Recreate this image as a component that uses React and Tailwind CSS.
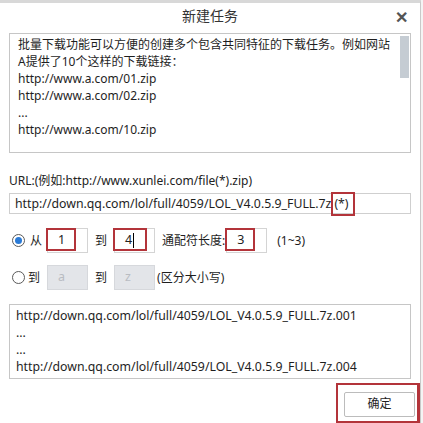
const font = {
  fontFamily: '"Noto Sans", "Noto Sans CJK SC", sans-serif',
};

function Radio({ checked }) {
  return (
    <span className="w-[13px] h-[13px] rounded-full border border-[#5a5a5a] flex items-center justify-center bg-white shrink-0">
      {checked && <span className="w-[7px] h-[7px] rounded-full bg-[#2a7ad6]" />}
    </span>
  );
}

function Box({ children, gray, marked, markW = 30 }) {
  return (
    <div
      className={`relative w-[41px] h-[25px] border flex items-center pl-[10px] text-[12.5px] ${
        gray ? "bg-[#e3e5e9] border-[#d6d8dc] text-[#b9bcc2]" : "bg-white border-[#d4d4d4] text-[#222]"
      }`}
    >
      {children}
      {marked && (
        <div
          className="absolute left-[-2px] top-[-1px] h-[23px] border-2 border-[#b3343a]"
          style={{ width: markW }}
        />
      )}
    </div>
  );
}

export default function App() {
  return (
    <div className="w-[423px] h-[423px] bg-[#f4f4f4] overflow-hidden" style={font}>
      <div className="w-[421px] h-[423px] bg-white border-r border-[#c9c9c9] border-t-[3px] border-t-[#d8d8d8] flex flex-col text-[#1e1e1e]">
        <div className="h-[30px] relative flex justify-center pt-[2px] text-[14px] text-[#333]">
          新建任务
          <span className="absolute right-[12px] top-[2px] text-[16px] font-bold text-[#555]">✕</span>
        </div>
        <div className="mx-[9px] h-[121px] border border-[#c6c6c6] relative pl-[8px] pt-[2px] text-[12px] leading-[17px]">
          <div>批量下载功能可以方便的创建多个包含共同特征的下载任务。例如网站</div>
          <div>A提供了10个这样的下载链接：</div>
          <div>http://www.a.com/01.zip</div>
          <div>http://www.a.com/02.zip</div>
          <div>...</div>
          <div>http://www.a.com/10.zip</div>
          <div className="absolute right-[1px] top-[2px] w-[9px] h-[42px] bg-[#c5ccd3]" />
        </div>
        <div className="mx-[9px] mt-[19px] text-[12px] leading-[17px] text-[#222]">
          URL:(例如:http://www.xunlei.com/file(*).zip)
        </div>
        <div className="mx-[9px] mt-[4px] h-[21px] border border-[#cfcfcf] flex items-center pl-[5px] text-[12.3px] relative">
          http://down.qq.com/lol/full/4059/LOL_V4.0.5.9_FULL.7z
          <span className="relative ml-[3px]">
            (*)
            <span className="absolute left-[-3px] top-[-3px] w-[24px] h-[24px] border-2 border-[#b3343a]" />
          </span>
        </div>
        <div className="mx-[9px] mt-[14px] h-[25px] flex items-center text-[12px]">
          <div className="ml-[3px]"><Radio checked /></div>
          <span className="ml-[5px] mr-[5px]">从</span>
          <Box marked>1</Box>
          <span className="ml-[7px] mr-[7px]">到</span>
          <Box marked markW={34}>4<span className="w-px h-[15px] bg-black ml-px" /></Box>
          <span className="ml-[7px]">通配符长度:</span>
          <div className="ml-[1px]"><Box marked>3</Box></div>
          <span className="ml-[10px]">(1~3)</span>
        </div>
        <div className="mx-[9px] mt-[12px] h-[25px] flex items-center text-[12px]">
          <div className="ml-[3px]"><Radio /></div>
          <span className="ml-[3px] mr-[7px]">到</span>
          <Box gray>a</Box>
          <span className="ml-[7px] mr-[7px]">到</span>
          <Box gray>z</Box>
          <span className="ml-[2px]">(区分大小写)</span>
        </div>
        <div className="mx-[9px] mt-[14px] h-[75px] border border-[#c6c6c6] pl-[6px] pt-[2px] text-[12.3px] leading-[17px]">
          <div>http://down.qq.com/lol/full/4059/LOL_V4.0.5.9_FULL.7z.001</div>
          <div>...</div>
          <div>...</div>
          <div>http://down.qq.com/lol/full/4059/LOL_V4.0.5.9_FULL.7z.004</div>
        </div>
        <div className="flex justify-end mt-[4px]">
          <div className="relative w-[84px] h-[40px] border-2 border-[#b3343a] border-r-[3px] flex items-center justify-center">
            <div className="w-[71px] h-[25px] ml-[4px] mt-[2px] border border-[#bcbcbc] rounded-[2px] bg-white flex items-center justify-center text-[12px]">
              确定
            </div>
          </div>
        </div>
      </div>
    </div>
  );
}
